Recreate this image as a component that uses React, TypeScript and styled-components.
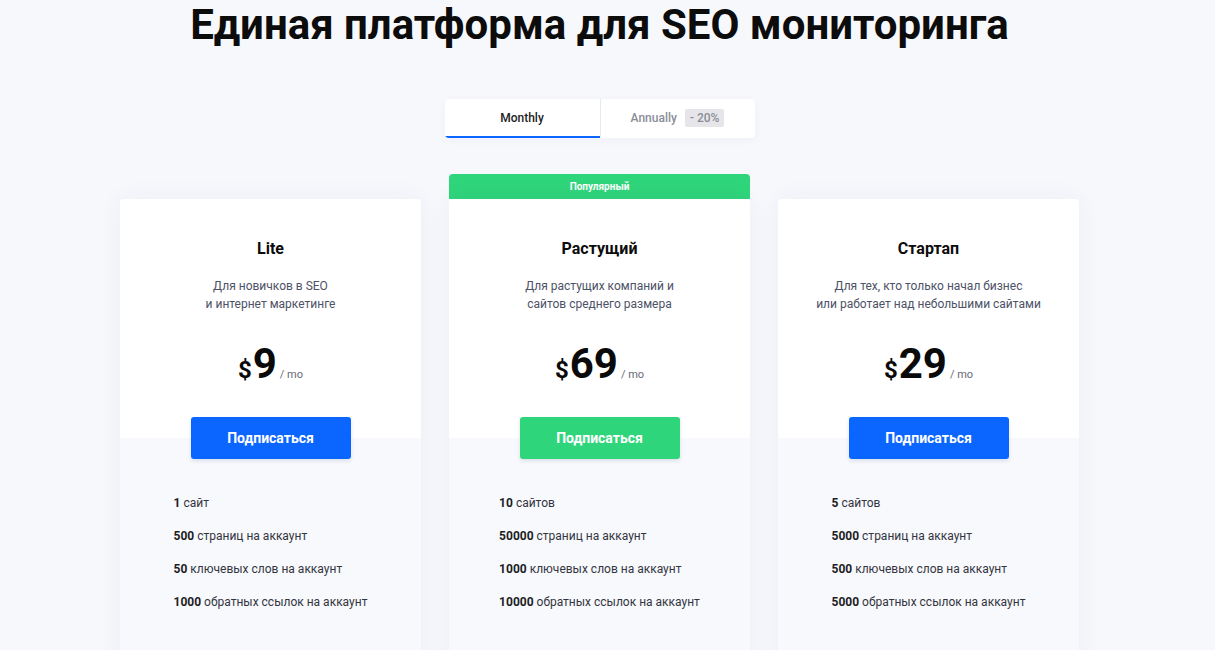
import React from "react";
import styled, { createGlobalStyle } from "styled-components";

const Global = createGlobalStyle`
  html, body { margin: 0; padding: 0; background: #f7f8fc; }
  body { font-family: Roboto, "Liberation Sans", Arial, sans-serif; -webkit-font-smoothing: antialiased; }
  * { box-sizing: border-box; }
`;

const Page = styled.div`
  width: 1199px;
  height: 650px;
  overflow: hidden;
  display: flex;
  flex-direction: column;
  align-items: center;
  & > * { flex-shrink: 0; }
`;

const Title = styled.h1`
  margin: 0;
  padding-top: 4px;
  font-size: 42px;
  line-height: 42px;
  font-weight: 700;
  color: #0c0c0c;
`;

const Toggle = styled.div`
  margin-top: 53px;
  display: flex;
  background: #fff;
  border-radius: 4px;
  box-shadow: 0 2px 10px rgba(30, 40, 90, 0.04);
  overflow: hidden;
`;

const Tab = styled.div<{ $active?: boolean }>`
  width: 155px;
  height: 39px;
  display: flex;
  align-items: center;
  justify-content: center;
  gap: 8px;
  font-size: 12px;
  font-weight: 500;
  color: ${(p) => (p.$active ? "#1d1d24" : "#8a8d96")};
  border-bottom: 2px solid ${(p) => (p.$active ? "#0a66ff" : "transparent")};
  & + & { border-left: 1px solid #e6e9f2; }
`;

const Badge = styled.span`
  background: #e6e6ea;
  color: #8a8d96;
  border-radius: 2px;
  padding: 2px 5px;
  font-size: 12px;
  font-weight: 500;
`;

const Plans = styled.div`
  margin-top: 36px;
  display: flex;
  gap: 28px;
`;

const Column = styled.div`
  width: 301px;
  display: flex;
  flex-direction: column;
`;

const Ribbon = styled.div<{ $show?: boolean }>`
  height: 25px;
  border-radius: 4px 4px 0 0;
  background: ${(p) => (p.$show ? "#2fd57b" : "transparent")};
  color: #fff;
  font-size: 10px;
  font-weight: 700;
  display: flex;
  align-items: center;
  justify-content: center;
`;

const Card = styled.div<{ $popular?: boolean }>`
  height: 480px;
  border-radius: ${(p) => (p.$popular ? "0 0 4px 4px" : "4px")};
  background: linear-gradient(to bottom, #ffffff 239px, #f8f9fd 239px);
  box-shadow: 0 0 24px rgba(40, 50, 100, 0.055);
  display: flex;
  flex-direction: column;
  align-items: center;
  padding-top: 38px;
`;

const PlanName = styled.div`
  font-size: 16px;
  line-height: 24px;
  font-weight: 700;
  color: #0c0c0c;
`;

const Desc = styled.div`
  margin-top: 16px;
  font-size: 12px;
  line-height: 18px;
  color: #4d5266;
  text-align: center;
`;

const Price = styled.div`
  margin-top: 30px;
  display: flex;
  align-items: baseline;
  color: #0a0a0a;
`;

const Currency = styled.span`
  font-size: 24px;
  font-weight: 700;
  line-height: 1;
  margin-right: 1px;
`;

const Amount = styled.span`
  font-size: 42px;
  font-weight: 700;
  line-height: 42px;
`;

const Per = styled.span`
  font-size: 11px;
  color: #666a78;
  margin-left: 3px;
`;

const Subscribe = styled.button<{ $green?: boolean }>`
  margin-top: 32px;
  width: 160px;
  height: 42px;
  border: none;
  border-radius: 3px;
  background: ${(p) => (p.$green ? "#2fd57b" : "#0a66ff")};
  color: #fff;
  font-family: inherit;
  font-size: 14px;
  font-weight: 700;
  box-shadow: 0 2px 4px rgba(20, 40, 90, 0.12);
`;

const Features = styled.ul`
  list-style: none;
  margin: 35px 0 0;
  padding: 0;
  display: flex;
  flex-direction: column;
  gap: 15px;
`;

const Feature = styled.li`
  font-size: 12px;
  line-height: 18px;
  color: #33353d;
  b { font-weight: 700; color: #1d1e24; }
`;

type Plan = {
  name: string;
  desc: string[];
  price: string;
  popular?: boolean;
  features: [string, string][];
};

const plans: Plan[] = [
  {
    name: "Lite",
    desc: ["Для новичков в SEO", "и интернет маркетинге"],
    price: "9",
    features: [
      ["1", "сайт"],
      ["500", "страниц на аккаунт"],
      ["50", "ключевых слов на аккаунт"],
      ["1000", "обратных ссылок на аккаунт"],
    ],
  },
  {
    name: "Растущий",
    desc: ["Для растущих компаний и", "сайтов среднего размера"],
    price: "69",
    popular: true,
    features: [
      ["10", "сайтов"],
      ["50000", "страниц на аккаунт"],
      ["1000", "ключевых слов на аккаунт"],
      ["10000", "обратных ссылок на аккаунт"],
    ],
  },
  {
    name: "Стартап",
    desc: ["Для тех, кто только начал бизнес", "или работает над небольшими сайтами"],
    price: "29",
    features: [
      ["5", "сайтов"],
      ["5000", "страниц на аккаунт"],
      ["500", "ключевых слов на аккаунт"],
      ["5000", "обратных ссылок на аккаунт"],
    ],
  },
];

export default function App() {
  return (
    <>
      <Global />
      <Page>
        <Title>Единая платформа для SEO мониторинга</Title>
        <Toggle>
          <Tab $active>Monthly</Tab>
          <Tab>
            Annually <Badge>- 20%</Badge>
          </Tab>
        </Toggle>
        <Plans>
          {plans.map((p) => (
            <Column key={p.name}>
              <Ribbon $show={p.popular}>{p.popular ? "Популярный" : ""}</Ribbon>
              <Card $popular={p.popular}>
                <PlanName>{p.name}</PlanName>
                <Desc>
                  {p.desc[0]}
                  <br />
                  {p.desc[1]}
                </Desc>
                <Price>
                  <Currency>$</Currency>
                  <Amount>{p.price}</Amount>
                  <Per>/ mo</Per>
                </Price>
                <Subscribe $green={p.popular}>Подписаться</Subscribe>
                <Features>
                  {p.features.map(([n, t]) => (
                    <Feature key={t}>
                      <b>{n}</b> {t}
                    </Feature>
                  ))}
                </Features>
              </Card>
            </Column>
          ))}
        </Plans>
      </Page>
    </>
  );
}
